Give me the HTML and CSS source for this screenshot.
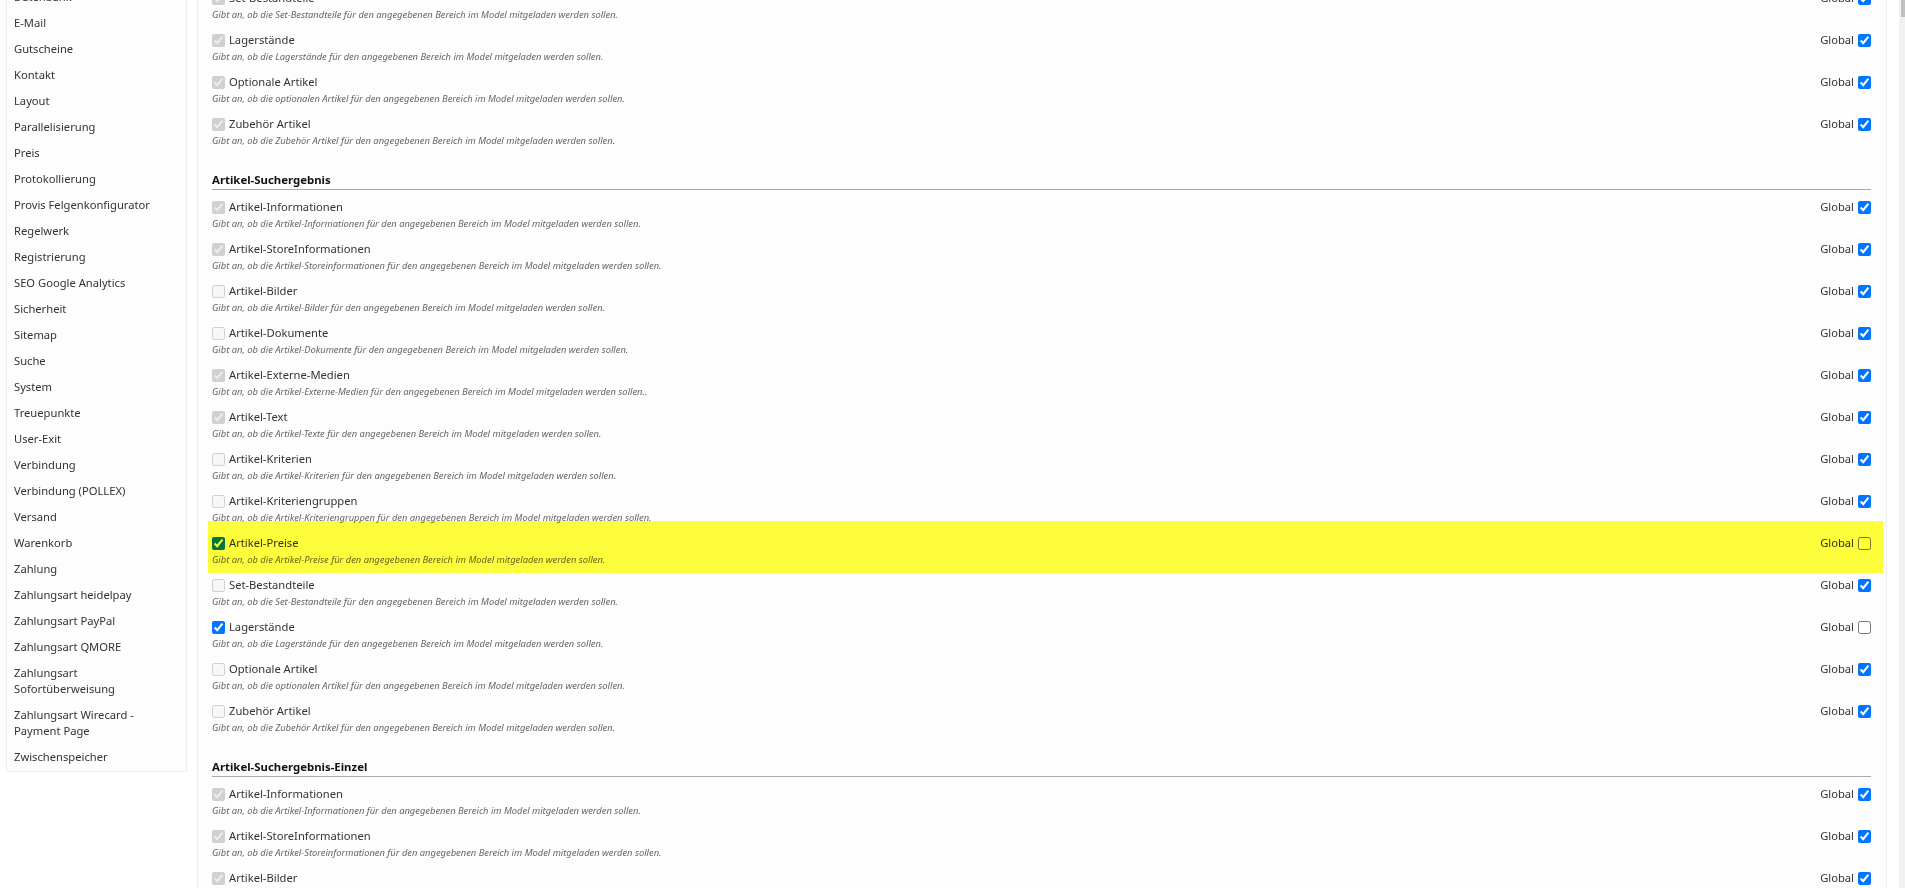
FILE: index.html
```html
<!DOCTYPE html>
<html lang="de">
  <head>
    <meta charset="UTF-8" />
    <meta name="viewport" content="width=device-width, initial-scale=1.0" />
    <title>Einstellungen</title>
    <link rel="stylesheet" href="styles.css">
  </head>
  <body>
    <div class="page">
      <div class="content">
        <ul class="sidebar">
          <li>Datenbank</li>
          <li>E-Mail</li>
          <li>Gutscheine</li>
          <li>Kontakt</li>
          <li>Layout</li>
          <li>Parallelisierung</li>
          <li>Preis</li>
          <li>Protokollierung</li>
          <li>Provis Felgenkonfigurator</li>
          <li>Regelwerk</li>
          <li>Registrierung</li>
          <li>SEO Google Analytics</li>
          <li>Sicherheit</li>
          <li>Sitemap</li>
          <li>Suche</li>
          <li>System</li>
          <li>Treuepunkte</li>
          <li>User-Exit</li>
          <li>Verbindung</li>
          <li>Verbindung (POLLEX)</li>
          <li>Versand</li>
          <li>Warenkorb</li>
          <li>Zahlung</li>
          <li>Zahlungsart heidelpay</li>
          <li>Zahlungsart PayPal</li>
          <li>Zahlungsart QMORE</li>
          <li>Zahlungsart Sofortüberweisung</li>
          <li>Zahlungsart Wirecard - Payment Page</li>
          <li>Zwischenspeicher</li>
        </ul>

        <div class="main">
          <div class="row">
            <div class="row-text">
              <label><input type="checkbox" checked disabled /> Set-Bestandteile</label>
              <p class="hint">Gibt an, ob die Set-Bestandteile für den angegebenen Bereich im Model mitgeladen werden sollen.</p>
            </div>
            <label class="global">Global <input type="checkbox" checked /></label>
          </div>
          <div class="row">
            <div class="row-text">
              <label><input type="checkbox" checked disabled /> Lagerstände</label>
              <p class="hint">Gibt an, ob die Lagerstände für den angegebenen Bereich im Model mitgeladen werden sollen.</p>
            </div>
            <label class="global">Global <input type="checkbox" checked /></label>
          </div>
          <div class="row">
            <div class="row-text">
              <label><input type="checkbox" checked disabled /> Optionale Artikel</label>
              <p class="hint">Gibt an, ob die optionalen Artikel für den angegebenen Bereich im Model mitgeladen werden sollen.</p>
            </div>
            <label class="global">Global <input type="checkbox" checked /></label>
          </div>
          <div class="row">
            <div class="row-text">
              <label><input type="checkbox" checked disabled /> Zubehör Artikel</label>
              <p class="hint">Gibt an, ob die Zubehör Artikel für den angegebenen Bereich im Model mitgeladen werden sollen.</p>
            </div>
            <label class="global">Global <input type="checkbox" checked /></label>
          </div>

          <h2>Artikel-Suchergebnis</h2>
          <div class="row">
            <div class="row-text">
              <label><input type="checkbox" checked disabled /> Artikel-Informationen</label>
              <p class="hint">Gibt an, ob die Artikel-Informationen für den angegebenen Bereich im Model mitgeladen werden sollen.</p>
            </div>
            <label class="global">Global <input type="checkbox" checked /></label>
          </div>
          <div class="row">
            <div class="row-text">
              <label><input type="checkbox" checked disabled /> Artikel-StoreInformationen</label>
              <p class="hint">Gibt an, ob die Artikel-Storeinformationen für den angegebenen Bereich im Model mitgeladen werden sollen.</p>
            </div>
            <label class="global">Global <input type="checkbox" checked /></label>
          </div>
          <div class="row">
            <div class="row-text">
              <label><input type="checkbox" disabled /> Artikel-Bilder</label>
              <p class="hint">Gibt an, ob die Artikel-Bilder für den angegebenen Bereich im Model mitgeladen werden sollen.</p>
            </div>
            <label class="global">Global <input type="checkbox" checked /></label>
          </div>
          <div class="row">
            <div class="row-text">
              <label><input type="checkbox" disabled /> Artikel-Dokumente</label>
              <p class="hint">Gibt an, ob die Artikel-Dokumente für den angegebenen Bereich im Model mitgeladen werden sollen.</p>
            </div>
            <label class="global">Global <input type="checkbox" checked /></label>
          </div>
          <div class="row">
            <div class="row-text">
              <label><input type="checkbox" checked disabled /> Artikel-Externe-Medien</label>
              <p class="hint">Gibt an, ob die Artikel-Externe-Medien für den angegebenen Bereich im Model mitgeladen werden sollen..</p>
            </div>
            <label class="global">Global <input type="checkbox" checked /></label>
          </div>
          <div class="row">
            <div class="row-text">
              <label><input type="checkbox" checked disabled /> Artikel-Text</label>
              <p class="hint">Gibt an, ob die Artikel-Texte für den angegebenen Bereich im Model mitgeladen werden sollen.</p>
            </div>
            <label class="global">Global <input type="checkbox" checked /></label>
          </div>
          <div class="row">
            <div class="row-text">
              <label><input type="checkbox" disabled /> Artikel-Kriterien</label>
              <p class="hint">Gibt an, ob die Artikel-Kriterien für den angegebenen Bereich im Model mitgeladen werden sollen.</p>
            </div>
            <label class="global">Global <input type="checkbox" checked /></label>
          </div>
          <div class="row">
            <div class="row-text">
              <label><input type="checkbox" disabled /> Artikel-Kriteriengruppen</label>
              <p class="hint">Gibt an, ob die Artikel-Kriteriengruppen für den angegebenen Bereich im Model mitgeladen werden sollen.</p>
            </div>
            <label class="global">Global <input type="checkbox" checked /></label>
          </div>
          <div class="row row-marked">
            <div class="row-text">
              <label><input type="checkbox" checked /> Artikel-Preise</label>
              <p class="hint">Gibt an, ob die Artikel-Preise für den angegebenen Bereich im Model mitgeladen werden sollen.</p>
            </div>
            <label class="global">Global <input type="checkbox" /></label>
          </div>
          <div class="row">
            <div class="row-text">
              <label><input type="checkbox" disabled /> Set-Bestandteile</label>
              <p class="hint">Gibt an, ob die Set-Bestandteile für den angegebenen Bereich im Model mitgeladen werden sollen.</p>
            </div>
            <label class="global">Global <input type="checkbox" checked /></label>
          </div>
          <div class="row">
            <div class="row-text">
              <label><input type="checkbox" checked /> Lagerstände</label>
              <p class="hint">Gibt an, ob die Lagerstände für den angegebenen Bereich im Model mitgeladen werden sollen.</p>
            </div>
            <label class="global">Global <input type="checkbox" /></label>
          </div>
          <div class="row">
            <div class="row-text">
              <label><input type="checkbox" disabled /> Optionale Artikel</label>
              <p class="hint">Gibt an, ob die optionalen Artikel für den angegebenen Bereich im Model mitgeladen werden sollen.</p>
            </div>
            <label class="global">Global <input type="checkbox" checked /></label>
          </div>
          <div class="row">
            <div class="row-text">
              <label><input type="checkbox" disabled /> Zubehör Artikel</label>
              <p class="hint">Gibt an, ob die Zubehör Artikel für den angegebenen Bereich im Model mitgeladen werden sollen.</p>
            </div>
            <label class="global">Global <input type="checkbox" checked /></label>
          </div>

          <h2>Artikel-Suchergebnis-Einzel</h2>
          <div class="row">
            <div class="row-text">
              <label><input type="checkbox" checked disabled /> Artikel-Informationen</label>
              <p class="hint">Gibt an, ob die Artikel-Informationen für den angegebenen Bereich im Model mitgeladen werden sollen.</p>
            </div>
            <label class="global">Global <input type="checkbox" checked /></label>
          </div>
          <div class="row">
            <div class="row-text">
              <label><input type="checkbox" checked disabled /> Artikel-StoreInformationen</label>
              <p class="hint">Gibt an, ob die Artikel-Storeinformationen für den angegebenen Bereich im Model mitgeladen werden sollen.</p>
            </div>
            <label class="global">Global <input type="checkbox" checked /></label>
          </div>
          <div class="row">
            <div class="row-text">
              <label><input type="checkbox" checked disabled /> Artikel-Bilder</label>
              <p class="hint">Gibt an, ob die Artikel-Bilder für den angegebenen Bereich im Model mitgeladen werden sollen.</p>
            </div>
            <label class="global">Global <input type="checkbox" checked /></label>
          </div>
        </div>
      </div>
      <div class="scrollbar"><div class="scrollbar-thumb"></div></div>
    </div>
  </body>
</html>
```

FILE: styles.css
```css
html,
body {
  height: 100%;
}
body {
  font-family: "Noto Sans", "Open Sans", sans-serif;
  font-size: 11.2px;
  line-height: 16px;
  margin: 0;
  color: #333;
  background-color: #fff;
  overflow: hidden;
}
.page {
  display: flex;
  height: 100%;
  overflow: hidden;
}
/* the shot is taken part way down the page */
.content {
  flex: 1;
  display: flex;
  align-items: flex-start;
  gap: 10px;
  margin-top: -19px;
  padding: 0 12px 0 6px;
  min-width: 0;
}
.sidebar {
  width: 181px;
  box-sizing: border-box;
  flex: none;
  list-style: none;
  margin: 3px 0 0;
  padding: 0;
  border: 1px solid #eee;
  background-color: #fdfdfd;
}
.sidebar li {
  padding: 4px 7px 6px;
}
.main {
  flex: 1;
  box-sizing: border-box;
  padding: 0 15px 0 14px;
  border-left: 1px solid #eee;
  border-right: 1px solid #eee;
  background-color: #fdfdfd;
  min-width: 0;
}
h2 {
  font-size: 11.4px;
  line-height: 16px;
  font-weight: bold;
  color: #111;
  margin: 23px 0 0;
  padding-bottom: 1px;
  border-bottom: 1px solid #aaa;
}
.row {
  display: flex;
  justify-content: space-between;
  align-items: flex-start;
  height: 42px;
  box-sizing: border-box;
  padding-top: 7px;
}
.row label {
  display: flex;
  align-items: center;
  gap: 4px;
  line-height: 20px;
}
.row input {
  width: 13px;
  height: 13px;
  margin: 0;
}
.hint {
  font-size: 9.35px;
  line-height: 12px;
  font-style: italic;
  color: #666;
  margin: 1px 0 0;
}
.row-marked {
  position: relative;
}
.row-marked::after {
  content: "";
  position: absolute;
  top: -5px;
  bottom: -5px;
  left: -4px;
  right: -12px;
  background-color: #ffff3c;
  mix-blend-mode: multiply;
  pointer-events: none;
}
.scrollbar {
  width: 6px;
  flex: none;
  background-color: #f1f1f1;
}
.scrollbar-thumb {
  height: 17px;
  margin-left: 2px;
  background-color: #c1c1c1;
}
```
